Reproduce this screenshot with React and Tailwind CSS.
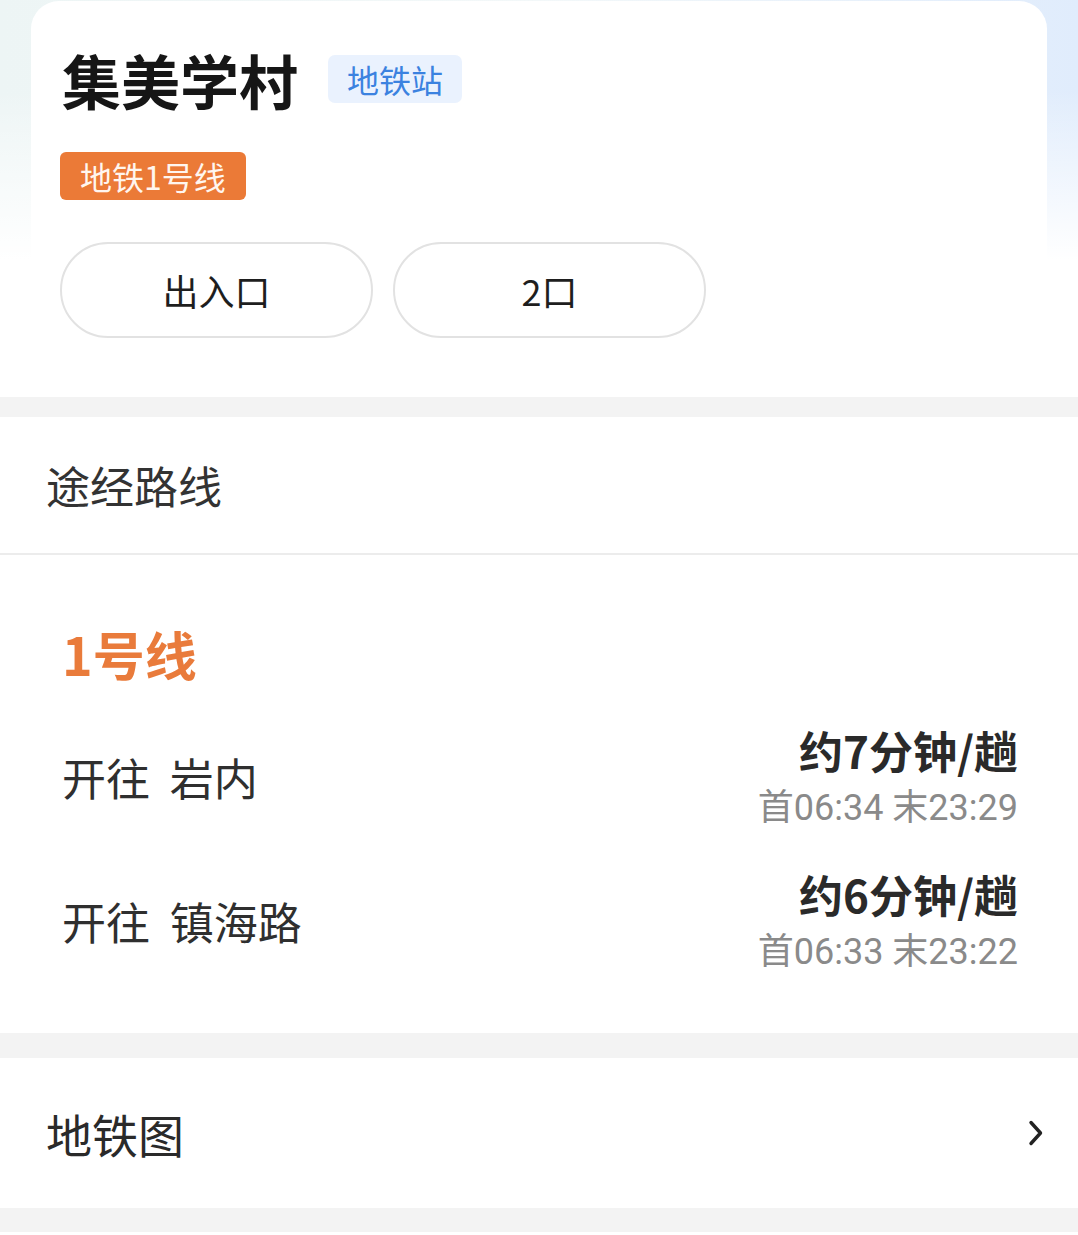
import React from "react";

const font = { fontFamily: '"Noto Sans CJK SC", "Noto Sans", sans-serif' };

function Chevron() {
  return (
    <svg width="16" height="26" viewBox="0 0 16 26" fill="none">
      <path d="M3 2.5 L12.5 13 L3 23.5" stroke="#222" strokeWidth="3.4" strokeLinecap="round" strokeLinejoin="round" />
    </svg>
  );
}

function Route({ dest, freq, times }) {
  return (
    <div className="flex h-[114px] items-center justify-between">
      <div className="text-[44px] leading-[60px] text-[#2f2f2f]">
        开往&nbsp;&nbsp;{dest}
      </div>
      <div className="flex flex-col items-end">
        <div className="text-[44px] font-bold leading-[60px] text-[#2a2a2a]">{freq}</div>
        <div className="mt-[2px] text-[36px] leading-[52px] text-[#8a8a8a] font-['Roboto','Noto_Sans_CJK_SC',sans-serif]">
          {times}
        </div>
      </div>
    </div>
  );
}

export default function App() {
  return (
    <div className="w-[1078px] h-[1235px] overflow-hidden bg-white" style={font}>
      {/* header with tinted background */}
      <div className="bg-[linear-gradient(to_bottom,rgba(255,255,255,0)_0px,rgba(255,255,255,0)_90px,#ffffff_260px),linear-gradient(90deg,#edf5f5_0%,#f3f8f9_50%,#e0ecfc_100%)] px-[31px] pt-[1px]">
        <div className="rounded-t-[28px] bg-white pl-[31px] pt-[49px] pb-[59px]">
          <div className="flex items-start">
            <div className="text-[59px] font-bold leading-[60px] text-[#161616]">集美学村</div>
            <div className="ml-[30px] mt-[5px] flex h-[48px] items-center rounded-[7px] bg-[#eaf2fe] px-[19px] text-[32px] leading-none text-[#3b82e0]">
              地铁站
            </div>
          </div>
          <div className="mt-[42px] flex">
            <div className="ml-[-2px] flex h-[48px] items-center rounded-[6px] bg-[#eb7a37] px-[20px] text-[32px] leading-none text-[#fff6ef]">
              地铁1号线
            </div>
          </div>
          <div className="ml-[-2px] mt-[42px] flex gap-[20px]">
            <div className="flex h-[96px] w-[313px] items-center justify-center rounded-full border-2 border-[#e2e2e2] text-[36px] text-[#1e1e1e]">
              出入口
            </div>
            <div className="flex h-[96px] w-[313px] items-center justify-center rounded-full border-2 border-[#e2e2e2] text-[36px] text-[#1e1e1e]">
              2口
            </div>
          </div>
        </div>
      </div>

      <div className="h-[20px] bg-[#f3f3f3]" />

      <div className="flex h-[136px] items-center pl-[46px] text-[44px] text-[#333]">途经路线</div>
      <div className="h-[2px] bg-[#ececec]" />

      <div className="pl-[62px] pr-[60px] pt-[68px] pb-[55px]">
        <div className="text-[52px] font-bold leading-[61px] text-[#e97b3b]">1号线</div>
        <div className="mt-[36px] flex flex-col gap-[30px]">
          <Route dest="岩内" freq="约7分钟/趟" times="首06:34 末23:29" />
          <Route dest="镇海路" freq="约6分钟/趟" times="首06:33 末23:22" />
        </div>
      </div>

      <div className="h-[25px] bg-[#f3f3f3]" />

      <div className="flex h-[150px] items-center justify-between pl-[46px] pr-[34px]">
        <div className="text-[46px] text-[#2a2a2a]">地铁图</div>
        <Chevron />
      </div>

      <div className="h-[24px] bg-[#f3f3f3]" />
    </div>
  );
}
